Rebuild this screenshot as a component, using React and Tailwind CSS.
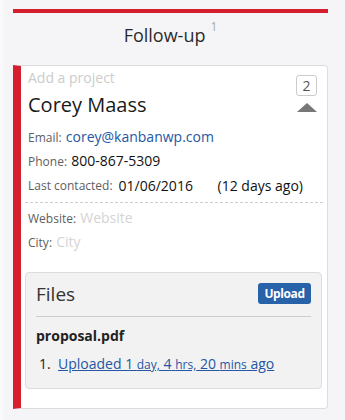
const font = { fontFamily: '"Open Sans", "Liberation Sans", sans-serif' };

const Row = ({ label, children, className = "" }) => (
  <div className={`h-[22px] leading-[22px] whitespace-nowrap ${className}`}>
    <span className="text-[12px] text-[#5e5e5e]">{label}</span> {children}
  </div>
);

const App = () => {
  return (
    <div
      className="w-[345px] h-[420px] bg-[#f5f5f8] border-l-[3px] border-l-[#fafafc] pl-[10px] pr-[17px] pt-[9px]"
      style={font}
    >
      <div className="h-[4px] bg-[#d51f2e]" />

      <h2 className="mt-[9px] h-[26px] text-center text-[18px] leading-[26px] text-[#2b2b2b]">
        Follow-up
        <sup className="ml-[5px] top-[-11px] text-[12px] text-[#aaa]">1</sup>
      </h2>

      {/* card */}
      <div className="mt-[17px] bg-white border border-[#ddd] border-l-[8px] border-l-[#d51f2e] rounded-r-[4px] pl-[7px] pr-[10px] pb-[19px]">
        <div className="flex justify-between">
          <div>
            <div className="mt-[2px] h-[20px] text-[14px] leading-[20px] text-[#ccc]">Add a project</div>
            <div className="mt-[3px] h-[28px] text-[20px] leading-[28px] text-[#1a1a1a]">Corey Maass</div>
          </div>
          <div className="flex flex-col items-center pt-[9px]">
            <div className="w-[21px] h-[21px] border border-[#ccc] rounded-[3px] text-[14px] leading-[19px] text-center text-[#555]">
              2
            </div>
            <div className="mt-[7px] w-0 h-0 border-l-[10px] border-r-[10px] border-b-[9px] border-l-transparent border-r-transparent border-b-[#777]" />
          </div>
        </div>

        <Row label="Email:" className="mt-[6px]">
          <a className="text-[14px] text-[#2456a4]">corey@kanbanwp.com</a>
        </Row>
        <Row label="Phone:" className="mt-[2px]">
          <span className="text-[14px] text-[#111]">800-867-5309</span>
        </Row>
        <div className="mt-[4px] h-[22px] leading-[22px] whitespace-nowrap flex">
          <span className="text-[12px] text-[#5e5e5e]">Last contacted:</span>
          <span className="ml-[6px] w-[99px] text-[14px] text-[#111]">01/06/2016</span>
          <span className="text-[14px] text-[#111]">(12 days ago)</span>
        </div>

        <div className="mt-[5px] -ml-[3px] mr-[-6px] border-t border-dashed border-[#ccc]" />

        <Row label="Website:" className="mt-[3px]">
          <span className="text-[14px] text-[#d4d4d4]">Website</span>
        </Row>
        <Row label="City:" className="mt-[2px]">
          <span className="text-[14px] text-[#d4d4d4]">City</span>
        </Row>

        {/* files */}
        <div className="mt-[20px] -ml-[3px] mr-[-5px] bg-[#f2f2f2] border border-[#ddd] rounded-[4px] px-[10px] pt-[10px] pb-[14px]">
          <div className="flex justify-between items-start pb-[11px] border-b border-[#ccc]">
            <span className="text-[19px] leading-[21px] mt-[1px] text-[#333]">Files</span>
            <button className="w-[53px] h-[21px] bg-[#2862a8] rounded-[3px] text-white text-[12px] font-bold tracking-[-0.4px] leading-[21px]">
              Upload
            </button>
          </div>
          <div className="mt-[9px] h-[20px] text-[14px] font-bold leading-[20px] text-[#222]">proposal.pdf</div>
          <ol className="mt-[8px] pl-[3px]">
            <li className="flex h-[20px] leading-[20px] text-[14px] whitespace-nowrap">
              <span className="w-[19px] text-[#222]">1.</span>
              <a className="text-[#2456a4] underline">
                Uploaded 1 <span className="text-[12px]">day,</span> 4{" "}
                <span className="text-[12px]">hrs,</span> 20{" "}
                <span className="text-[12px]">mins</span> ago
              </a>
            </li>
          </ol>
        </div>
      </div>
    </div>
  );
};

export default App;
